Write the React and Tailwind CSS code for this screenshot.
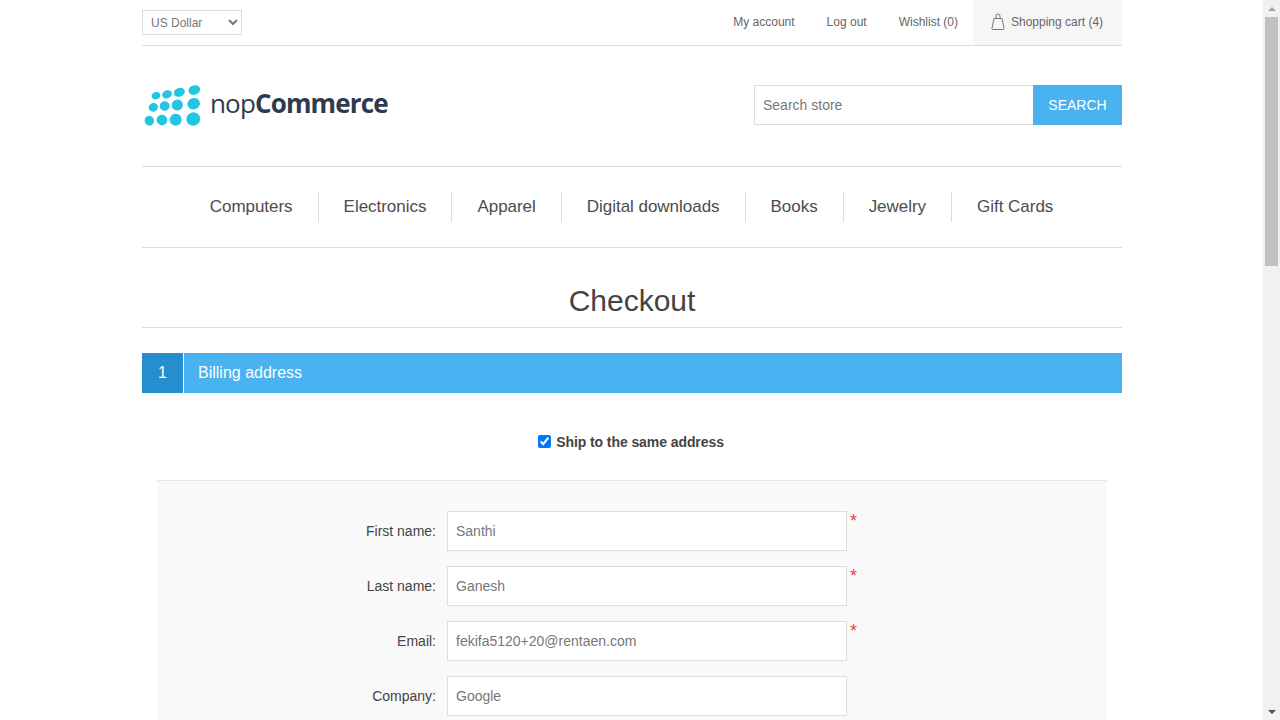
import React from 'react';

const navItems = ['Computers', 'Electronics', 'Apparel', 'Digital downloads', 'Books', 'Jewelry', 'Gift Cards'];

const fields = [
    { label: 'First name:', value: 'Santhi', required: true },
    { label: 'Last name:', value: 'Ganesh', required: true },
    { label: 'Email:', value: 'fekifa5120+20@rentaen.com', required: true },
    { label: 'Company:', value: 'Google', required: false },
];

const dots = [
    [48, 47, 13, 11], [81, 43, 15, 12], [118, 37, 17, 13], [163, 30, 18, 14],
    [40, 82, 14, 13], [74, 78, 15, 14], [112, 75, 17, 16], [161, 71, 19, 17],
    [28, 122, 14, 15], [66, 120, 16, 16], [107, 119, 18, 18], [160, 117, 21, 20],
];

const Logo = () => (
    <div className="flex items-center -mt-[5px]">
        <svg width="62" height="50" viewBox="6 0 186 150" className="shrink-0">
            {dots.map(([cx, cy, rx, ry]) => (
                <ellipse key={`${cx}-${cy}`} cx={cx} cy={cy} rx={rx} ry={ry} fill="#22c6e3" transform={`rotate(-20 ${cx} ${cy})`} />
            ))}
        </svg>
        <span className="ml-[6px] -mt-[4px] text-[26px] leading-none tracking-[-0.85px] text-[#2e3a4e] font-['Open_Sans']">
            <span className="font-normal">nop</span>
            <span className="font-bold">Commerce</span>
        </span>
    </div>
);

const BagIcon = () => (
    <svg width="14" height="17" viewBox="0 0 14 17" fill="none" stroke="#777" strokeWidth="1">
        <path d="M3 5.5h8l2 9.5a1 1 0 0 1-1 1.5H2a1 1 0 0 1-1-1.5z" />
        <path d="M5 5.5V3a2 2 0 0 1 4 0v2.5" />
    </svg>
);

const Header = () => (
    <div>
        <div className="flex items-center justify-between h-[46px] border-b border-[#ddd]">
            <select className="w-[100px] h-[25px] pl-1 border border-[#ddd] bg-white text-xs text-[#777]">
                <option>US Dollar</option>
            </select>
            <div className="flex items-center h-[45px] text-xs text-[#666]">
                <a className="mr-8 pb-[2px]">My account</a>
                <a className="mr-8 pb-[2px]">Log out</a>
                <a className="mr-[15px] pb-[2px]">Wishlist (0)</a>
                <div className="flex items-center h-full w-[149px] pl-[18px] pb-[2px] gap-[6px] bg-[#f6f6f6]">
                    <BagIcon />
                    <span>Shopping cart (4)</span>
                </div>
            </div>
        </div>
        <div className="flex items-start justify-between h-[120px] pt-[39px]">
            <Logo />
            <div className="flex h-10">
                <input
                    placeholder="Search store"
                    className="w-[279px] h-10 px-2 border border-r-0 border-[#ddd] text-sm text-[#777] placeholder:text-[#777] outline-none"
                />
                <button className="w-[89px] h-10 bg-[#4ab2f1] text-sm text-white">SEARCH</button>
            </div>
        </div>
    </div>
);

const Nav = () => (
    <div className="flex items-center justify-center h-[82px] pr-[1px] border-y border-[#ddd]">
        {navItems.map((item, i) => (
            <span
                key={item}
                className={`px-[25px] h-[30px] leading-[30px] text-[17px] tracking-[-0.03px] text-[#4c4c4c] ${i > 0 ? 'border-l border-[#ddd]' : ''}`}
            >
                {item}
            </span>
        ))}
    </div>
);

const FieldRow = ({ label, value, required }) => (
    <div className="flex items-center">
        <label className="w-[290px] pr-[11px] text-right text-sm text-[#444]">{label}</label>
        <input
            defaultValue={value}
            className="w-[400px] h-10 px-2 border border-[#ddd] bg-white text-sm text-[#777] outline-none"
        />
        {required && <span className="self-start ml-[3px] text-lg leading-5 text-[#e4434b]">*</span>}
    </div>
);

const Scrollbar = () => (
    <div className="flex flex-col items-center w-[17px] shrink-0 h-screen bg-[#f1f1f1]">
        <div className="flex items-center justify-center h-[17px] w-full shrink-0">
            <div className="w-0 h-0 border-x-[4px] border-x-transparent border-b-[4px] border-b-[#a3a3a3]" />
        </div>
        <div className="w-[13px] h-[249px] bg-[#c1c1c1]" />
        <div className="flex items-center justify-center h-[17px] w-full shrink-0 mt-auto">
            <div className="w-0 h-0 border-x-[4px] border-x-transparent border-t-[4px] border-t-[#505050]" />
        </div>
    </div>
);

const App = () => (
    <div className="flex h-screen overflow-hidden bg-white font-['Liberation_Sans',Arial,sans-serif]">
        <div className="flex-1 min-w-0 overflow-hidden">
            <div className="w-[980px] ml-[142px]">
                <Header />
                <Nav />
                <div className="flex items-center justify-center h-[80px] pt-[26px] border-b border-[#ddd] text-[30px] text-[#444]">
                    Checkout
                </div>
                <div className="flex items-center h-10 mt-[25px] bg-[#4ab2f1] text-white">
                    <div className="w-[41px] h-full flex items-center justify-center bg-[#248ece] text-base">1</div>
                    <div className="w-px h-full mr-[14px] bg-white" />
                    <span className="text-base">Billing address</span>
                </div>
                <div className="flex items-center justify-center h-[87px] pt-[10px] pr-[2px] text-sm font-bold tracking-[-0.08px] text-[#444]">
                    <input type="checkbox" defaultChecked className="w-[13px] h-[13px] m-0 mr-[5px] accent-[#0075ff]" />
                    <label>Ship to the same address</label>
                </div>
                <div className="mx-[15px] pt-[30px] border-t border-[#e6e6e6] bg-[#f9f9f9] flex flex-col gap-[15px] pb-5">
                    {fields.map((f) => (
                        <FieldRow key={f.label} {...f} />
                    ))}
                </div>
            </div>
        </div>
        <Scrollbar />
    </div>
);

export default App;
